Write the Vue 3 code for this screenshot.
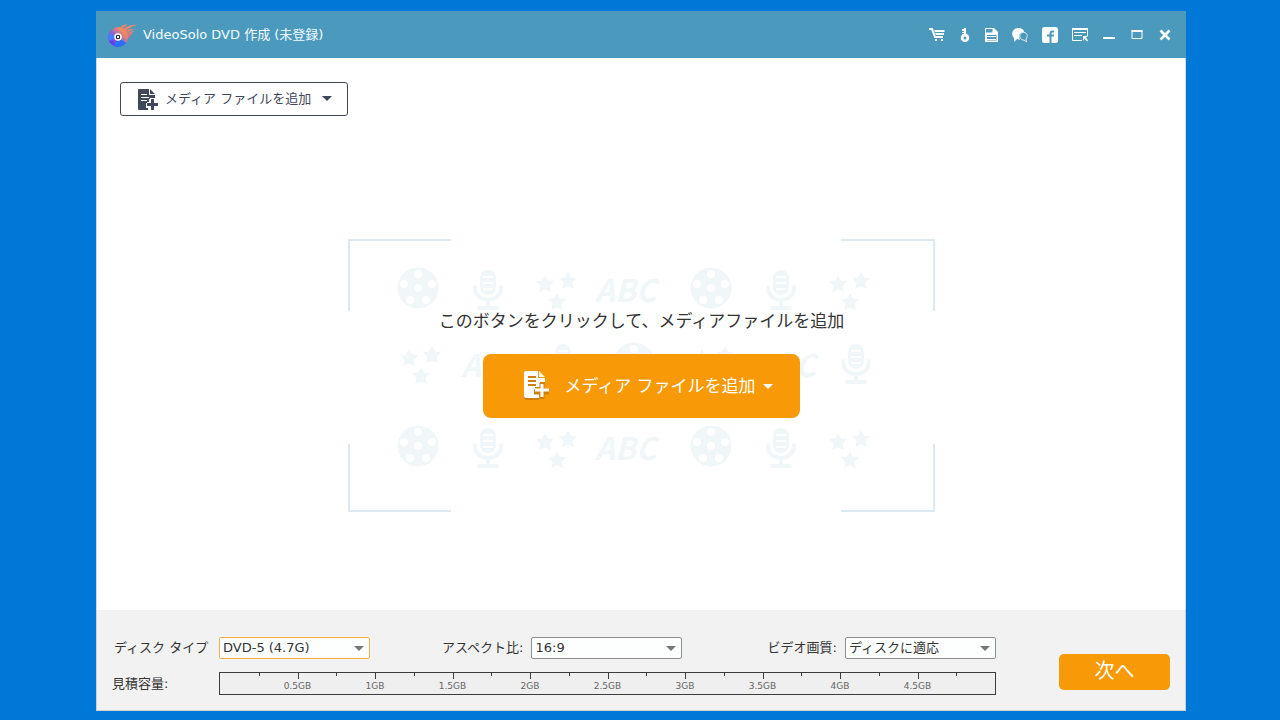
<script setup>
import { ref } from 'vue'

const discType = ref('DVD-5 (4.7G)')
const aspect = ref('16:9')
const quality = ref('ディスクに適応')

const segments = Array.from({ length: 20 }, (_, i) => {
  const major = i > 0 && i % 2 === 0
  return { id: i, major, label: major ? `${i / 4}GB` : '' }
})

const reels = [[70, 49], [363, 49], [286, 124], [70, 207], [363, 207]]
const mics = [[140, 31], [433, 31], [215, 105], [508, 105], [140, 189], [433, 189]]
const stars = [[197, 45], [490, 45], [61, 119], [354, 119], [197, 203], [490, 203]]
const words = [[247, 63], [113, 138], [406, 138], [247, 221]]
const holes = [[0, 0], [0, -14], [14, -4], [8, 12], [-8, 12], [-14, -4]]
const starSpots = [[0, 0], [23, -3], [12, 18]]
</script>

<template>
  <div class="desktop">
    <div class="window">
      <header class="titlebar">
        <svg class="logo" viewBox="0 0 30 26" aria-hidden="true">
          <defs>
            <linearGradient id="disc" x1="0" y1="1" x2="1" y2="0">
              <stop offset="0.15" stop-color="#5a35f5" />
              <stop offset="0.5" stop-color="#9a6cc4" />
              <stop offset="0.75" stop-color="#f08a62" />
            </linearGradient>
            <linearGradient id="flame" x1="0" y1="1" x2="1" y2="0">
              <stop offset="0" stop-color="#6c5be0" />
              <stop offset="0.6" stop-color="#e98468" />
              <stop offset="1" stop-color="#d98a76" />
            </linearGradient>
          </defs>
          <path d="M7 6C13 5 13 2 19 1L17 4C21 3 24 1 29 2C25 3 24 5 22 6L28 6C23 8 25 12 20 16Z" fill="url(#flame)" />
          <path d="M15 5L21 2M19 7L26 3M21 9L27 6" stroke="#4b9abd" fill="none" />
          <circle cx="10" cy="14" r="10" fill="url(#disc)" />
          <path d="M10 14L6 23A10 10 0 0 0 18 20Z" fill="#2b6dff" />
          <path d="M10 14L1 10A10 10 0 0 0 1 18Z" fill="#4a7cff" />
          <circle cx="10" cy="14" r="3" fill="#101018" stroke="#fff" stroke-width="1.500" />
          <circle cx="10" cy="14" r="1.200" fill="#fff" />
        </svg>
        <h1>VideoSolo DVD 作成 (未登録)</h1>
        <nav class="tools" aria-label="ウィンドウ">
          <button type="button" aria-label="購入">
            <svg width="16" height="14" viewBox="0 0 16 14"><path d="M0 1h3l3 8h8" fill="none" stroke="#fff" stroke-width="2" /><path d="M5 2h10.500v2H6zM6 5h9v2H7zM6 11h2v2H6zM12 11h2v2h-2z" fill="#fff" /></svg>
          </button>
          <button class="slim" type="button" aria-label="登録">
            <svg width="10" height="16" viewBox="0 0 10 16"><path d="M4 1h2v7H4zM2 2h3v2H2zM2 5h3v1H2z" fill="#fff" /><path fill-rule="evenodd" d="M5 6.500a4 4 0 1 1 0 8.500a4 4 0 1 1 0-8.500zM5 9.500a1.500 1.500 0 1 0 0 3a1.500 1.500 0 1 0 0-3z" fill="#fff" /></svg>
          </button>
          <button type="button" aria-label="保存">
            <svg width="14" height="14" viewBox="0 0 14 14"><path fill-rule="evenodd" d="M0 0h9l4 4v10H0zM1 1h6.500v3.500H1zM2 7v5.500h9.500V7z" fill="#fff" /><path d="M2 8.500h9M2 11.500h9" stroke="#fff" /></svg>
          </button>
          <button type="button" aria-label="サポート">
            <svg width="16" height="16" viewBox="0 0 16 16"><path d="M6.500 1C10 1 12 3 12 5C8 5 6 8 8 13L5 12L2 15V11C-2 7 1 1 6.500 1z" fill="#fff" /><path d="M10 5.500C15 4.500 16.500 9 14 12L14.500 15L12 13C8 13.500 6 7.500 10 5.500z" fill="#4b9abd" stroke="#fff" stroke-opacity="0.8" /></svg>
          </button>
          <button class="broad" type="button" aria-label="Facebook">
            <svg width="16" height="16" viewBox="0 0 16 16"><rect width="16" height="16" rx="2.500" fill="#fff" /><path d="M12 4.500h-1.500Q8.500 4.500 8.500 6.500V16M5 8.500h7" fill="none" stroke="#4b9abd" stroke-width="2" /></svg>
          </button>
          <button class="medium" type="button" aria-label="メニュー">
            <svg width="16" height="14" viewBox="0 0 16 14"><path d="M10 12.500H.5V.5h15V8M2 4.500h12M2 7.500h8" fill="none" stroke="#fff" /><path d="M0 0h16v2H0zM11 8h5l-2 1.500 2 3-1 1-2.500-3L11 13z" fill="#fff" /></svg>
          </button>
          <button type="button" aria-label="最小化">
            <svg width="12" height="12" viewBox="0 0 12 12"><path d="M0 8h12v2H0z" fill="#fff" /></svg>
          </button>
          <button type="button" aria-label="最大化">
            <svg width="12" height="12" viewBox="0 0 12 12"><path d="M1 1.500h10v8H1z" fill="none" stroke="#fff" /><path d="M.5 1h11v2H.5z" fill="#fff" /></svg>
          </button>
          <button type="button" aria-label="閉じる">
            <svg width="12" height="12" viewBox="0 0 12 12"><path d="M1.500 1.500l9 9M10.500 1.500l-9 9" stroke="#fff" stroke-width="2.500" /></svg>
          </button>
        </nav>
      </header>

      <main class="stage">
        <button class="add-small" type="button">
          <svg width="21" height="22" viewBox="0 0 21 22" aria-hidden="true">
            <path d="M1 1h10v6h6v4h-6v4H8v5h2v2H1a1 1 0 0 1-1-1V2a1 1 0 0 1 1-1zM12 1l5 5h-5z" fill="#41475a" />
            <path d="M3 6.500h6M3 9.500h8M3 12.500h6" stroke="#fff" />
            <path d="M14.500 10v12M9 16.500h12" stroke="#fff" stroke-width="5" />
            <path d="M14.500 11v11M9 16.500h11" stroke="#41475a" stroke-width="3" />
          </svg>
          <span>メディア ファイルを追加</span>
          <svg class="caret" width="10" height="5" viewBox="0 0 10 5" aria-hidden="true"><path d="M0 0h10L5 5z" fill="#41475a" /></svg>
        </button>

        <section class="drop">
          <svg class="pattern" viewBox="0 0 587 273" aria-hidden="true">
            <path d="M103 1H1v71M493 1h93v71M1 205v67h102M586 205v67h-93" fill="none" stroke="#dbe9f1" stroke-width="2" />
            <g fill="#f1f7f9">
              <g v-for="(p, i) in reels" :key="'r' + i" :transform="`translate(${p[0]} ${p[1]})`">
                <circle r="20.500" />
                <circle v-for="(h, j) in holes" :key="j" :cx="h[0]" :cy="h[1]" r="4" fill="#fff" />
              </g>
              <g v-for="(p, i) in mics" :key="'m' + i" :transform="`translate(${p[0]} ${p[1]})`">
                <rect x="-8" y="0" width="16" height="25" rx="8" />
                <path d="M-5 7H5M-5 13H5M-5 19H5" stroke="#fff" stroke-width="2" />
                <path d="M-13 17v2a13 11 0 0 0 26 0v-2M0 30v7M-9 38H9" fill="none" stroke="#f1f7f9" stroke-width="4" stroke-linecap="round" />
              </g>
              <g v-for="(p, i) in stars" :key="'s' + i" :transform="`translate(${p[0]} ${p[1]})`">
                <path v-for="(s, j) in starSpots" :key="j" :transform="`translate(${s[0]} ${s[1]})`" d="M0-9L3-3.500L9-3L4.500 2L6 8L0 5.500L-6 8L-4.500 2L-9-3L-3-3.500z" />
              </g>
              <text v-for="(p, i) in words" :key="'w' + i" :x="p[0]" :y="p[1]" class="abc">ABC</text>
            </g>
          </svg>
          <p>このボタンをクリックして、メディアファイルを追加</p>
          <button class="add-large" type="button">
            <svg width="28" height="32" viewBox="0 0 28 32" aria-hidden="true">
              <path d="M3 3h12v7h7v3h-5v5h-5v7h4v5H3a2 2 0 0 1-2-2V5a2 2 0 0 1 2-2z" fill="#cd7f12" />
              <path d="M3 1h12v7h7v4h-5v5h-5v7h4v4H3a2 2 0 0 1-2-2V3a2 2 0 0 1 2-2zM16 1l6 6h-6z" fill="#fff" />
              <path d="M5 7h8M5 11h8M5 15h8" stroke="#cd7f12" stroke-width="2" />
              <path d="M19 13v16M11 22h15" stroke="#cd7f12" stroke-width="5" />
              <path d="M19 14v13M12 20h14" stroke="#fff" stroke-width="3" />
            </svg>
            <span>メディア ファイルを追加</span>
            <svg class="caret" width="10" height="5" viewBox="0 0 10 5" aria-hidden="true"><path d="M0 0h10L5 5z" fill="#fff" /></svg>
          </button>
        </section>
      </main>

      <footer class="footer">
        <div class="settings">
          <label class="lead" for="disc-type">ディスク タイプ</label>
          <div class="fields">
            <span class="combo active">
              <select id="disc-type" v-model="discType"><option>DVD-5 (4.7G)</option><option>DVD-9 (8.5G)</option></select>
              <svg width="10" height="5" viewBox="0 0 10 5" aria-hidden="true"><path d="M0 0h10L5 5z" fill="#777" /></svg>
            </span>
            <div class="field">
              <label for="aspect">アスペクト比:</label>
              <span class="combo">
                <select id="aspect" v-model="aspect"><option>16:9</option><option>4:3</option></select>
                <svg width="10" height="5" viewBox="0 0 10 5" aria-hidden="true"><path d="M0 0h10L5 5z" fill="#777" /></svg>
              </span>
            </div>
            <div class="field last">
              <label for="quality">ビデオ画質:</label>
              <span class="combo">
                <select id="quality" v-model="quality"><option>ディスクに適応</option><option>高</option></select>
                <svg width="10" height="5" viewBox="0 0 10 5" aria-hidden="true"><path d="M0 0h10L5 5z" fill="#777" /></svg>
              </span>
            </div>
          </div>
          <span class="size-label">見積容量:</span>
          <div class="ruler">
            <div v-for="s in segments" :key="s.id" class="segment" :class="{ major: s.major, first: s.id === 0 }">
              <span>{{ s.label }}</span>
            </div>
          </div>
        </div>
        <button class="next" type="button">次へ</button>
      </footer>
    </div>
  </div>
</template>

<style>
body {
  margin: 0;
  background: #0078d7;
}
</style>

<style scoped>
.desktop {
  box-sizing: border-box;
  min-height: 100vh;
  padding: 11px 94px 9px 96px;
  display: flex;
  font-family: "DejaVu Sans", "Noto Sans CJK JP", sans-serif;
  font-size: 13px;
  line-height: 20px;
  color: #333;
}
.window {
  flex: 1;
  min-width: 0;
  display: flex;
  flex-direction: column;
  background: #fff;
}
button, select {
  font: inherit;
  color: inherit;
}
button {
  margin: 0;
  padding: 0;
  border: 0;
  background: none;
}
svg {
  display: block;
  flex: none;
}
.titlebar {
  height: 47px;
  display: flex;
  align-items: center;
  padding: 0 7px 0 12px;
  background: #4b9abd;
}
.logo {
  width: 30px;
  height: 26px;
  margin-top: 3px;
}
h1 {
  margin: 0 0 0 5px;
  font-size: 13px;
  font-weight: 400;
  color: #f4fafc;
}
.tools {
  display: flex;
  margin-left: auto;
}
.tools button {
  width: 28px;
  height: 28px;
  display: flex;
  align-items: center;
  justify-content: center;
}
.tools .slim {
  width: 27px;
}
.tools .medium {
  width: 30px;
}
.tools .broad {
  width: 31px;
}
.stage {
  flex: 1;
  display: flex;
  flex-direction: column;
  padding: 24px 22px 0 23px;
  border: solid #d9d9d9;
  border-width: 0 1px;
}
.add-small {
  align-self: flex-start;
  height: 34px;
  margin-bottom: 25px;
  display: flex;
  align-items: center;
  padding: 0 15px 1px 17px;
  border: 1px solid #41475a;
  border-radius: 3px;
  color: #41475a;
}
.add-small span {
  margin: 0 11px 0 6px;
}
.drop {
  position: relative;
  box-sizing: border-box;
  width: 100%;
  max-width: 587px;
  min-height: 273px;
  margin: auto;
  padding-top: 69px;
  display: flex;
  flex-direction: column;
  align-items: center;
  gap: 20px;
}
.pattern {
  position: absolute;
  inset: 0;
  width: 100%;
  height: 100%;
}
.abc {
  font: italic bold 31px "Noto Sans CJK JP", sans-serif;
}
.drop p {
  position: relative;
  margin: 0;
  font-size: 17px;
  line-height: 26px;
}
.add-large {
  position: relative;
  height: 64px;
  padding: 0 27px 0 40px;
  display: flex;
  align-items: center;
  border-radius: 8px;
  background: #f89908;
  color: #fff;
  font-size: 17px;
}
.add-large span {
  margin: 0 7px 0 13px;
}
.footer {
  display: flex;
  align-items: flex-start;
  gap: 63px;
  padding: 27px 15px 15px;
  border: solid #d0d0d0;
  border-width: 0 1px 1px;
  background: #f2f2f2;
}
.settings {
  flex: 1;
  display: grid;
  grid-template-columns: 107px 1fr;
  row-gap: 13px;
  align-items: center;
}
.lead {
  padding-left: 2px;
}
.fields, .field {
  display: flex;
  align-items: center;
}
.field {
  gap: 8px;
  margin-left: 72px;
}
.field.last {
  margin-left: auto;
}
.combo {
  position: relative;
  width: 151px;
}
.combo select {
  display: block;
  box-sizing: border-box;
  width: 100%;
  height: 22px;
  padding: 0 20px 0 3px;
  border: 1px solid #8f8f8f;
  border-radius: 2px;
  background: #fdfefe;
  appearance: none;
  line-height: 20px;
}
.combo.active select {
  border-color: #f9b04c;
}
.combo svg {
  position: absolute;
  right: 6px;
  top: 9px;
  pointer-events: none;
}
.ruler {
  box-sizing: border-box;
  height: 23px;
  display: grid;
  grid-template-columns: repeat(20, 1fr);
  border: 1px solid #3c3c3c;
  background: #efefef;
}
.segment {
  position: relative;
  display: flex;
  min-width: 0;
}
.segment::before {
  content: "";
  width: 1px;
  height: 3px;
  background: #3c3c3c;
}
.segment.major::before {
  height: 6px;
}
.segment.first::before {
  height: 0;
}
.segment span {
  position: absolute;
  top: 7px;
  left: 0;
  transform: translateX(-50%);
  font-size: 9px;
  line-height: 12px;
  color: #666;
}
.next {
  width: 111px;
  height: 36px;
  margin-top: 17px;
  padding-bottom: 2px;
  border-radius: 5px;
  background: #f89908;
  color: #fff;
  font-size: 20px;
}
</style>
